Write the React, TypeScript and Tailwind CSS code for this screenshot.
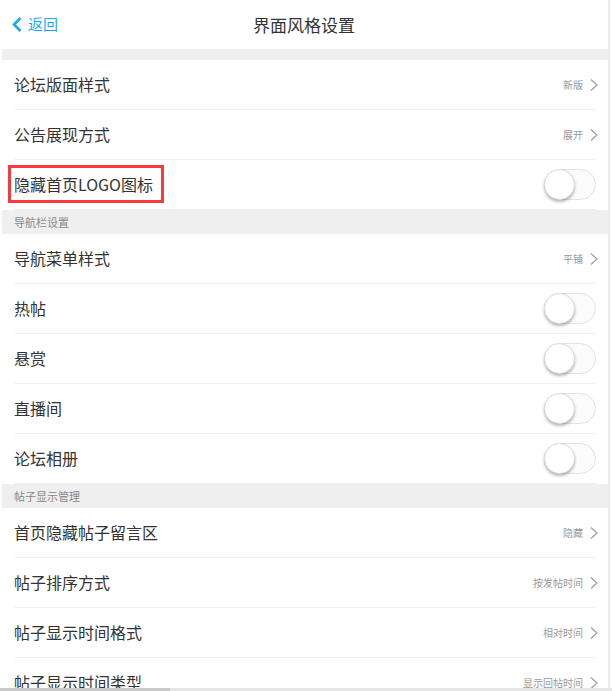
import clsx from 'clsx'

// ─── Types ────────────────────────────────────────────────────────────────────

type Row =
  | { kind: 'link'; label: string; value: string }
  | { kind: 'toggle'; label: string; marked?: boolean }

type Section = { title?: string; rows: Row[] }

const sections: Section[] = [
  {
    rows: [
      { kind: 'link', label: '论坛版面样式', value: '新版' },
      { kind: 'link', label: '公告展现方式', value: '展开' },
      { kind: 'toggle', label: '隐藏首页LOGO图标', marked: true },
    ],
  },
  {
    title: '导航栏设置',
    rows: [
      { kind: 'link', label: '导航菜单样式', value: '平铺' },
      { kind: 'toggle', label: '热帖' },
      { kind: 'toggle', label: '悬赏' },
      { kind: 'toggle', label: '直播间' },
      { kind: 'toggle', label: '论坛相册' },
    ],
  },
  {
    title: '帖子显示管理',
    rows: [
      { kind: 'link', label: '首页隐藏帖子留言区', value: '隐藏' },
      { kind: 'link', label: '帖子排序方式', value: '按发帖时间' },
      { kind: 'link', label: '帖子显示时间格式', value: '相对时间' },
      { kind: 'link', label: '帖子显示时间类型', value: '显示回帖时间' },
    ],
  },
]

const font = "font-['Noto_Sans_CJK_SC','Noto_Sans',sans-serif]"

// ─── Bits ─────────────────────────────────────────────────────────────────────

function Chevron() {
  return (
    <svg width="8" height="12" viewBox="0 0 8 12" className="shrink-0 -mr-[2px]">
      <polyline points="1,0.5 7,6 1,11.5" fill="none" stroke="#9a9a9a" strokeWidth="1.1" />
    </svg>
  )
}

function Toggle() {
  return (
    <div className="relative w-[52px] h-[31px] rounded-full border border-[#e3e3e3] bg-[#fbfbfb]">
      <div className="absolute -left-px -top-px w-[31px] h-[31px] rounded-full bg-white border border-[#dcdcdc] shadow-[0_2px_3px_rgba(0,0,0,0.28)]" />
    </div>
  )
}

function SettingRow({ row }: { row: Row }) {
  return (
    <div className="relative h-[50px] pl-[14px] pr-[12px]">
      <div className="h-full flex items-center border-b border-[#f0f0f0]">
        <span className="text-[16px] text-[#333] leading-6 -mt-px">{row.label}</span>
        <div className="ml-auto flex items-center gap-[7px]">
          {row.kind === 'link' ? (
            <>
              <span className="text-[10px] text-[#999]">{row.value}</span>
              <Chevron />
            </>
          ) : (
            <Toggle />
          )}
        </div>
      </div>
      {row.kind === 'toggle' && row.marked && (
        <div className="absolute left-[8px] top-[5px] w-[156px] h-[38px] border-[3px] border-[#f53c3c]" />
      )}
    </div>
  )
}

// ─── Page ─────────────────────────────────────────────────────────────────────

export default function App() {
  return (
    <div className={clsx('relative w-[612px] h-[691px] overflow-hidden bg-white', font)}>
      <div className="w-[610px] border-r-2 border-[#ececec] min-h-full">
        {/* header */}
        <div className="relative h-[49px] flex items-center justify-center">
          <div className="absolute left-[12px] top-0 h-full flex items-center gap-[6px]">
            <svg width="10" height="15" viewBox="0 0 10 15">
              <polyline points="8.5,1 2,7.5 8.5,14" fill="none" stroke="#1eaaef" strokeWidth="2.6" />
            </svg>
            <span className="text-[15px] text-[#1eaaef]">返回</span>
          </div>
          <span className="text-[17px] text-[#333]">界面风格设置</span>
        </div>

        {sections.map((s, i) => (
          <div key={i}>
            {s.title ? (
              <div className="ml-[2px] h-[24px] bg-[#efefef] flex items-center pl-[12px] text-[11px] text-[#888]">
                {s.title}
              </div>
            ) : (
              <div className="ml-[2px] h-[11px] bg-[#efefef]" />
            )}
            {s.rows.map((r) => (
              <SettingRow key={r.label} row={r} />
            ))}
          </div>
        ))}
      </div>

      {/* scrollbar */}
      <div className="absolute left-0 right-0 bottom-0 h-[3px] bg-[#e6e6e6]">
        <div className="w-[170px] h-full bg-[#c9c9c9]" />
      </div>
    </div>
  )
}
